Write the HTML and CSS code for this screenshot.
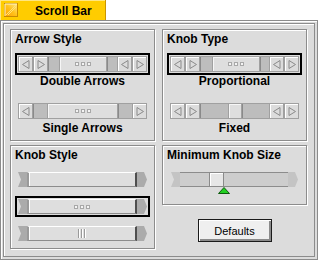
FILE: index.html
```html
<!DOCTYPE html>
<html lang="en">
<head>
    <meta charset="UTF-8">
    <title>Scroll Bar</title>
    <link rel="stylesheet" href="styles.css">
</head>
<body>

<div class="tab">
    <svg class="tab-icon" width="14" height="14" viewBox="0 0 14 14">
        <defs>
            <linearGradient id="tabGrad" x1="0" y1="1" x2="1" y2="0">
                <stop offset="0" stop-color="#ff9d00"/>
                <stop offset="0.5" stop-color="#ffc21a"/>
                <stop offset="1" stop-color="#ffe98a"/>
            </linearGradient>
        </defs>
        <rect x="0.5" y="0.5" width="13" height="13" fill="url(#tabGrad)" stroke="#c98a00"/>
        <path d="M1 1h12M1 1v12" stroke="#fff6c8"/>
        <path d="M2 12L12 2M4 12L12 4" stroke="#ffe27a" stroke-width="1"/>
    </svg>
    <span class="tab-label">Scroll Bar</span>
</div>

<div class="window">
    <div class="window-body">

        <!-- Arrow Style -->
        <div class="group">
            <div class="group-title">Arrow Style</div>
            <div class="frame selected">
                <div class="scrollbar">
                    <span class="arrow"><svg width="8" height="9"><polygon points="7,0.5 0.5,4.5 7,8.5" /></svg></span>
                    <span class="arrow"><svg width="8" height="9"><polygon points="1,0.5 7.5,4.5 1,8.5" /></svg></span>
                    <span class="trough"></span>
                    <span class="knob knob-mid"><span class="grip"><i></i><i></i><i></i></span></span>
                    <span class="trough"></span>
                    <span class="arrow"><svg width="8" height="9"><polygon points="7,0.5 0.5,4.5 7,8.5" /></svg></span>
                    <span class="arrow"><svg width="8" height="9"><polygon points="1,0.5 7.5,4.5 1,8.5" /></svg></span>
                </div>
            </div>
            <div class="option-label">Double Arrows</div>
            <div class="frame second">
                <div class="scrollbar">
                    <span class="arrow"><svg width="8" height="9"><polygon points="7,0.5 0.5,4.5 7,8.5" /></svg></span>
                    <span class="trough"></span>
                    <span class="knob knob-long"><span class="grip"><i></i><i></i><i></i></span></span>
                    <span class="trough"></span>
                    <span class="arrow"><svg width="8" height="9"><polygon points="1,0.5 7.5,4.5 1,8.5" /></svg></span>
                </div>
            </div>
            <div class="option-label">Single Arrows</div>
        </div>

        <!-- Knob Type -->
        <div class="group">
            <div class="group-title">Knob Type</div>
            <div class="frame selected">
                <div class="scrollbar">
                    <span class="arrow"><svg width="8" height="9"><polygon points="7,0.5 0.5,4.5 7,8.5" /></svg></span>
                    <span class="arrow"><svg width="8" height="9"><polygon points="1,0.5 7.5,4.5 1,8.5" /></svg></span>
                    <span class="trough"></span>
                    <span class="knob knob-mid"><span class="grip"><i></i><i></i><i></i></span></span>
                    <span class="trough trough-short"></span>
                    <span class="arrow"><svg width="8" height="9"><polygon points="7,0.5 0.5,4.5 7,8.5" /></svg></span>
                    <span class="arrow"><svg width="8" height="9"><polygon points="1,0.5 7.5,4.5 1,8.5" /></svg></span>
                </div>
            </div>
            <div class="option-label">Proportional</div>
            <div class="frame second">
                <div class="scrollbar">
                    <span class="arrow"><svg width="8" height="9"><polygon points="7,0.5 0.5,4.5 7,8.5" /></svg></span>
                    <span class="arrow"><svg width="8" height="9"><polygon points="1,0.5 7.5,4.5 1,8.5" /></svg></span>
                    <span class="trough"></span>
                    <span class="knob knob-small"></span>
                    <span class="trough"></span>
                    <span class="arrow"><svg width="8" height="9"><polygon points="7,0.5 0.5,4.5 7,8.5" /></svg></span>
                    <span class="arrow"><svg width="8" height="9"><polygon points="1,0.5 7.5,4.5 1,8.5" /></svg></span>
                </div>
            </div>
            <div class="option-label">Fixed</div>
        </div>

        <!-- Knob Style -->
        <div class="group">
            <div class="group-title">Knob Style</div>
            <div class="frame">
                <div class="style-bar">
                    <span class="cap-left"></span>
                    <span class="style-knob"></span>
                    <span class="cap-right"></span>
                </div>
            </div>
            <div class="frame selected stacked">
                <div class="style-bar">
                    <span class="cap-left"></span>
                    <span class="style-knob"><span class="grip"><i></i><i></i><i></i></span></span>
                    <span class="cap-right"></span>
                </div>
            </div>
            <div class="frame stacked">
                <div class="style-bar">
                    <span class="cap-left"></span>
                    <span class="style-knob"><span class="lines"><i></i><i></i><i></i></span></span>
                    <span class="cap-right"></span>
                </div>
            </div>
        </div>

        <div class="column">
            <!-- Minimum Knob Size -->
            <div class="group group-short">
                <div class="group-title">Minimum Knob Size</div>
                <div class="slider">
                    <span class="cap-left light"></span>
                    <span class="slider-track"></span>
                    <span class="cap-right light"></span>
                    <span class="slider-knob"></span>
                    <svg class="slider-marker" width="12" height="7" viewBox="0 0 12 7">
                        <polygon points="6,0.5 11.5,6.5 0.5,6.5" fill="#22d022" stroke="#0d5a0d"/>
                    </svg>
                </div>
            </div>
            <button class="defaults">Defaults</button>
        </div>

    </div>
</div>

</body>
</html>
```

FILE: styles.css
```css
body {
    margin: 0;
    background: #fff;
    font-family: "Liberation Sans", Arial, sans-serif;
    color: #000;
}
.tab {
    width: 106px;
    height: 20px;
    box-sizing: border-box;
    background: #ffcc00;
    border-right: 1px solid #c99400;
    box-shadow: inset 1px 1px #ffe680;
    display: flex;
    align-items: center;
    padding-left: 4px;
}
.tab-icon {
    display: block;
    flex: none;
}
.tab-label {
    margin-left: 17px;
    font-size: 12px;
    font-weight: bold;
    line-height: 14px;
    padding-top: 2px;
}
.window {
    width: 318px;
    height: 240px;
    box-sizing: border-box;
    background: #dcdcdc;
    border: 1px solid #8c8c8c;
    box-shadow: inset 1px 1px #fff;
    padding: 2px;
}
.window-body {
    height: 100%;
    box-sizing: border-box;
    border: 1px solid #8c8c8c;
    box-shadow: inset 1px 1px #fff;
    padding: 5px 7px 6px 6px;
    display: grid;
    grid-template-columns: 145px 145px;
    grid-template-rows: 112px 104px;
    gap: 4px 7px;
}
.group {
    border: 1px solid #8c8c8c;
    box-shadow: inset 1px 1px #fff, 1px 1px #fff;
    padding: 2px 4px 0;
    display: flex;
    flex-direction: column;
    align-items: center;
    min-height: 0;
}
.group-title {
    align-self: stretch;
    font-size: 12px;
    font-weight: bold;
    line-height: 14px;
    margin-bottom: 7px;
}
.frame {
    border: 2px solid transparent;
    padding: 1px;
}
.frame.selected {
    border-color: #000;
}
.frame.second {
    margin-top: 13px;
}
.frame.stacked {
    margin-top: 6px;
}
.option-label {
    font-size: 12px;
    font-weight: bold;
    line-height: 12px;
    margin-top: 0;
}

/* scroll bars */
.scrollbar {
    display: flex;
    width: 129px;
    height: 16px;
}
.arrow {
    flex: none;
    width: 15px;
    box-sizing: border-box;
    background: #dcdcdc;
    border: 1px solid #a0a0a0;
    box-shadow: inset 1px 1px #fff;
    display: flex;
    align-items: center;
    justify-content: center;
}
.arrow svg {
    display: block;
}
.arrow polygon {
    fill: none;
    stroke: #8a8a8a;
}
.trough {
    flex: 1;
    background: #bdbdbd;
    border-top: 1px solid #a0a0a0;
    border-bottom: 1px solid #a0a0a0;
    box-shadow: inset 1px 0 #8a8a8a;
}
.trough-short {
    flex: 0.8;
}
.knob {
    flex: none;
    box-sizing: border-box;
    background: #dedede;
    border: 1px solid #a0a0a0;
    box-shadow: inset 1px 1px #f6f6f6;
    display: flex;
    align-items: center;
    justify-content: center;
}
.knob-mid {
    width: 48px;
}
.knob-long {
    width: 71px;
}
.knob-small {
    width: 14px;
}
.grip {
    display: flex;
    gap: 2px;
}
.grip i {
    width: 4px;
    height: 4px;
    box-sizing: border-box;
    border: 1px solid #a8a8a8;
    background: #f4f4f4;
}
.lines {
    display: flex;
    gap: 1px;
}
.lines i {
    width: 2px;
    height: 9px;
    box-sizing: border-box;
    border-left: 1px solid #9a9a9a;
    background: #fff;
}

/* knob style bars */
.style-bar {
    display: flex;
    width: 129px;
    height: 15px;
}
.cap-left {
    flex: none;
    width: 9px;
    background: #ababab;
    clip-path: polygon(0 0, 100% 0, 100% 100%, 0 100%, 3px 50%);
}
.cap-right {
    flex: none;
    width: 10px;
    background: #ababab;
    clip-path: polygon(0 0, calc(100% - 3px) 0, 100% 50%, calc(100% - 3px) 100%, 0 100%);
}
.style-knob {
    flex: 1;
    box-sizing: border-box;
    background: #dedede;
    border-top: 1px solid #fff;
    border-left: 2px solid #9a9a9a;
    border-right: 2px solid #4e4e4e;
    border-bottom: 1px solid #8c8c8c;
    box-shadow: inset 1px 0 #fff;
    display: flex;
    align-items: center;
    justify-content: center;
}

/* minimum knob size */
.column {
    display: flex;
    flex-direction: column;
    align-items: center;
}
.group-short {
    align-self: stretch;
    height: 60px;
    box-sizing: border-box;
}
.group-short .group-title {
    margin-bottom: 10px;
}
.slider {
    position: relative;
    display: flex;
    width: 127px;
    height: 15px;
}
.cap-left.light,
.cap-right.light {
    background: #c4c4c4;
}
.slider-track {
    flex: 1;
    background: #cdcdcd;
    border-top: 1px solid #8c8c8c;
    border-bottom: 1px solid #8c8c8c;
}
.slider-knob {
    position: absolute;
    left: 38px;
    top: 0;
    width: 15px;
    height: 15px;
    box-sizing: border-box;
    background: #e6e6e6;
    border: 1px solid #8a8a8a;
    box-shadow: inset 1px 1px #fff;
}
.slider-marker {
    position: absolute;
    left: 47px;
    top: 15px;
    display: block;
}
.defaults {
    margin-top: 14px;
    width: 74px;
    height: 23px;
    padding: 0;
    border: 1px solid #1a1a1a;
    background: #efefef;
    box-shadow: inset 1px 1px #fff, inset -2px -2px #8a8a8a;
    font-family: "Liberation Sans", Arial, sans-serif;
    font-size: 11px;
    color: #000;
}
```
